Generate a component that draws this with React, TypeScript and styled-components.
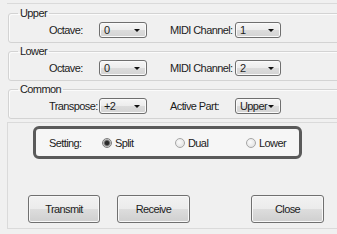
import * as React from "react";
import styled, { createGlobalStyle } from "styled-components";

const GlobalStyle = createGlobalStyle`
  html, body {
    margin: 0;
    padding: 0;
    background: #f0f0f0;
  }
  body {
    font-family: "Liberation Sans", Arial, sans-serif;
    font-size: 11px;
    letter-spacing: -0.6px;
    color: #1c1c1c;
  }
`;

const Dialog = styled.div`
  width: 337px;
  height: 234px;
  overflow: hidden;
  background: #f0f0f0;
  padding-top: 3px;
  box-sizing: border-box;
`;

const TopRule = styled.div`
  margin-left: 7px;
  border-top: 1px solid #dadada;
`;

const Group = styled.fieldset<{ top: number }>`
  margin: ${(p) => p.top}px -12px 0 8px;
  padding: 0;
  min-width: 0;
  height: 36px;
  box-sizing: border-box;
  border: 1px solid #d3d3d3;
  border-radius: 3px;
  box-shadow: inset 1px 1px 0 #fbfbfb;
`;

const Legend = styled.legend`
  margin-left: 9px;
  padding: 0 2px;
  font-size: 11px;
  line-height: 12px;
  color: #1c1c1c;
`;

const Row = styled.div`
  display: flex;
  align-items: center;
  height: 16px;
  margin-top: 3px;
  padding-left: 40px;
`;

const Label = styled.span<{ w: number; gap?: number }>`
  width: ${(p) => p.w}px;
  margin-left: ${(p) => p.gap || 0}px;
  white-space: nowrap;
  flex: none;
`;

const Combo = styled.div<{ w: number }>`
  width: ${(p) => p.w}px;
  height: 16px;
  box-sizing: border-box;
  flex: none;
  display: flex;
  align-items: center;
  padding-left: 4px;
  border: 1px solid #6f6f6f;
  border-radius: 3px;
  background: linear-gradient(#f6f6f6 0%, #ececec 50%, #dcdcdc 51%, #d3d3d3 100%);
  box-shadow: inset 0 0 0 1px #fafafa;
`;

const Arrow = styled.span`
  margin-left: auto;
  margin-right: 6px;
  width: 0;
  height: 0;
  border-left: 3px solid transparent;
  border-right: 3px solid transparent;
  border-top: 3px solid #111;
`;

const LowerPanel = styled.div`
  margin: 3px -12px 0 7px;
  border-top: 1px solid #dadada;
  border-left: 1px solid #dadada;
  border-bottom: 1px solid #dadada;
  padding: 3px 0 5px 0;
`;

const SettingBox = styled.div`
  margin-left: 25px;
  width: 269px;
  height: 33px;
  box-sizing: border-box;
  border: 3px solid #5a5a5a;
  border-radius: 6px;
  background: #f6f6f6;
  display: flex;
  align-items: center;
  padding-left: 13px;
`;

const Choice = styled.label<{ w?: number }>`
  display: flex;
  align-items: center;
  gap: 3px;
  width: ${(p) => (p.w ? `${p.w}px` : "auto")};
  flex: none;
`;

const Radio = styled.span<{ checked?: boolean }>`
  width: 10px;
  height: 10px;
  border-radius: 50%;
  box-sizing: border-box;
  border: 1px solid ${(p) => (p.checked ? "#7d7d7d" : "#a6a6a6")};
  background: ${(p) =>
    p.checked
      ? "radial-gradient(circle at 50% 50%, #2a2a2a 0 1.8px, #6f6f6f 2.6px, #cdcdcd 3.8px)"
      : "radial-gradient(circle at 40% 40%, #fbfbfb 0, #dcdcdc 100%)"};
`;

const ButtonRow = styled.div`
  display: flex;
  margin-top: 36px;
  padding-left: 20px;
`;

const Button = styled.button<{ w: number; gap?: number }>`
  width: ${(p) => p.w}px;
  margin-left: ${(p) => p.gap || 0}px;
  height: 28px;
  padding: 0;
  font-family: "Liberation Sans", Arial, sans-serif;
  font-size: 11px;
  letter-spacing: -0.6px;
  color: #1c1c1c;
  border: 1px solid #707070;
  border-radius: 3px;
  background: linear-gradient(#f2f2f2 0%, #ebebeb 50%, #dddddd 51%, #cfcfcf 100%);
  box-shadow: inset 0 0 0 1px #f8f8f8;
`;

const App: React.FunctionComponent = () => {
  return (
    <Dialog>
      <GlobalStyle />
      <TopRule />
      <Group top={3}>
        <Legend>Upper</Legend>
        <Row>
          <Label w={50}>Octave:</Label>
          <Combo w={48}>
            0<Arrow />
          </Combo>
          <Label w={65} gap={23}>
            MIDI Channel:
          </Label>
          <Combo w={46}>
            1<Arrow />
          </Combo>
        </Row>
      </Group>
      <Group top={2}>
        <Legend>Lower</Legend>
        <Row>
          <Label w={50}>Octave:</Label>
          <Combo w={48}>
            0<Arrow />
          </Combo>
          <Label w={65} gap={23}>
            MIDI Channel:
          </Label>
          <Combo w={46}>
            2<Arrow />
          </Combo>
        </Row>
      </Group>
      <Group top={2}>
        <Legend>Common</Legend>
        <Row>
          <Label w={50}>Transpose:</Label>
          <Combo w={48}>
            +2<Arrow />
          </Combo>
          <Label w={65} gap={23}>
            Active Part:
          </Label>
          <Combo w={46}>
            Upper<Arrow />
          </Combo>
        </Row>
      </Group>
      <LowerPanel>
        <SettingBox>
          <Label w={53}>Setting:</Label>
          <Choice w={73}>
            <Radio checked />
            Split
          </Choice>
          <Choice w={71}>
            <Radio />
            Dual
          </Choice>
          <Choice>
            <Radio />
            Lower
          </Choice>
        </SettingBox>
        <ButtonRow>
          <Button w={72}>Transmit</Button>
          <Button w={73} gap={17}>
            Receive
          </Button>
          <Button w={73} gap={61}>
            Close
          </Button>
        </ButtonRow>
      </LowerPanel>
    </Dialog>
  );
};

export default App;
